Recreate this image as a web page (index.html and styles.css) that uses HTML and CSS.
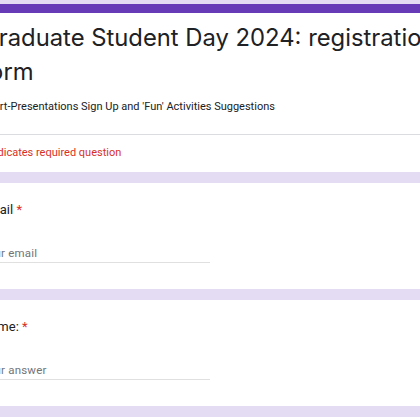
FILE: index.html
```html
<!DOCTYPE html>
<html lang="en">
<head>
<meta charset="utf-8">
<title>Graduate Student Day 2024: registration form</title>
<link rel="stylesheet" href="styles.css">
</head>
<body>
<div class="viewport">
  <div class="page">
    <section class="card header-card">
      <div class="accent-bar"></div>
      <div class="header-body">
        <h1 class="form-title">Graduate Student Day 2024: registration form</h1>
        <p class="form-desc">Short-Presentations Sign Up and 'Fun' Activities Suggestions</p>
      </div>
      <div class="divider"></div>
      <div class="required-note">* Indicates required question</div>
    </section>

    <section class="card question">
      <div class="q-label">Email <span class="req">*</span></div>
      <div class="q-input">Your email</div>
    </section>

    <section class="card question">
      <div class="q-label">Name: <span class="req">*</span></div>
      <div class="q-input">Your answer</div>
    </section>

    <section class="card question">
      <div class="q-label">Affiliation: <span class="req">*</span></div>
      <div class="q-input">Your answer</div>
    </section>
  </div>
</div>
</body>
</html>
```
FILE: styles.css
```css
html, body {
  margin: 0;
  padding: 0;
  overflow: hidden;
  background: #e3dcf2;
}

.viewport {
  width: 420px;
  height: 420px;
  overflow: hidden;
  background: #e3dcf2;
}

.page {
  width: 520px;
  margin-left: -43px;
  padding-top: 4px;
  display: flex;
  flex-direction: column;
  gap: 11px;
}

.card {
  background: #ffffff;
  padding: 0 24px;
}

.header-card {
  padding: 0;
}

.accent-bar {
  height: 9px;
  background: #673ab7;
}

.header-body {
  padding: 8px 24px 20px;
}

.form-title {
  margin: 0;
  font-family: "Inter", "Lato", sans-serif;
  font-weight: 400;
  font-size: 23.8px;
  line-height: 34px;
  color: #202124;
}

.form-desc {
  margin: 10px 0 0;
  font-family: "Roboto", "Liberation Sans", sans-serif;
  font-size: 11px;
  line-height: 15px;
  color: #202124;
}

.divider {
  height: 1px;
  background: #dadce0;
}

.required-note {
  padding: 10px 24px 12px;
  font-family: "Roboto", "Liberation Sans", sans-serif;
  font-size: 11px;
  line-height: 15px;
  color: #d93025;
}

.question {
  padding-top: 18px;
  padding-bottom: 26px;
}

.q-label {
  font-family: "Roboto", "Liberation Sans", sans-serif;
  font-size: 13px;
  line-height: 18px;
  color: #202124;
}

.req {
  color: #d93025;
}

.q-input {
  margin-top: 26px;
  width: 229px;
  padding-bottom: 1px;
  border-bottom: 1px solid #e0e0e0;
  font-family: "Roboto", "Liberation Sans", sans-serif;
  font-size: 11.5px;
  line-height: 16px;
  letter-spacing: 0.2px;
  color: #70757a;
}
```
